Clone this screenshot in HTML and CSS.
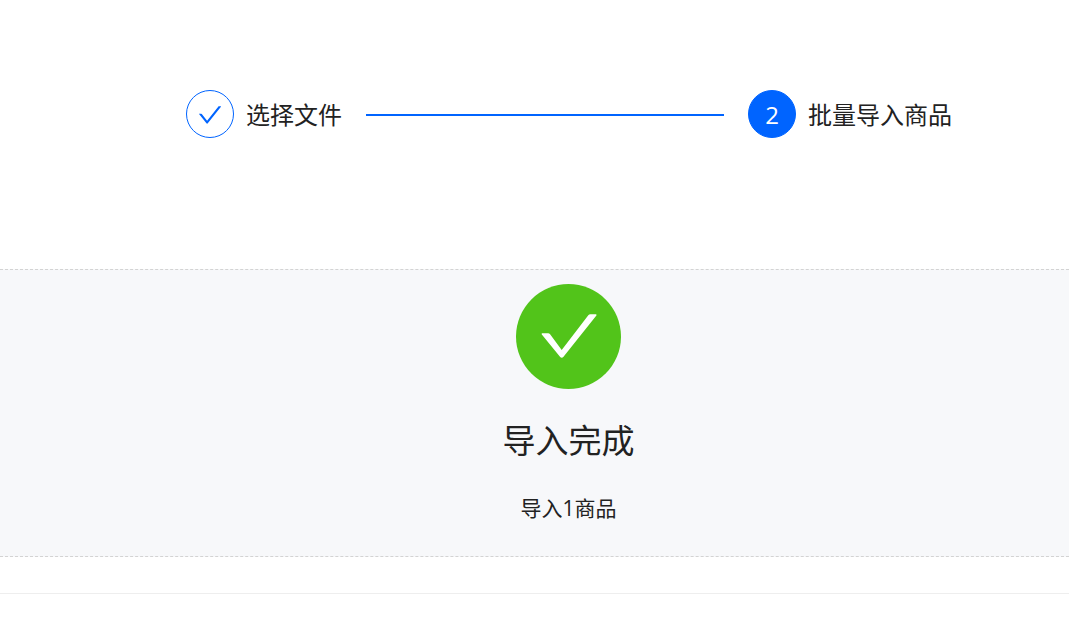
FILE: index.html
```
<!DOCTYPE html>
<html lang="zh-CN">
  <head>
    <title>批量导入商品</title>
    <meta charset="UTF-8">
    <meta name="viewport" content="width=device-width, initial-scale=1">
    <link rel="stylesheet" href="styles.css">
  </head>
  <body>
    <ol class="steps">
      <li class="step step-finished">
        <span class="step-icon">
          <svg class="step-check" viewBox="104 190 816 644" fill="currentColor" aria-hidden="true">
            <path d="M912 190h-69.9c-9.8 0-19.1 4.5-25.1 12.2L404.7 724.5 207 474a32 32 0 0 0-25.1-12.2H112c-6.7 0-10.4 7.7-6.3 12.9l273.9 347c12.8 16.2 37.4 16.2 50.3 0l488.4-618.9c4.1-5.1.4-12.8-6.3-12.8z"/>
          </svg>
        </span>
        <span class="step-title">选择文件</span>
      </li>
      <li class="step step-active" aria-current="step">
        <span class="step-icon">2</span>
        <span class="step-title">批量导入商品</span>
      </li>
    </ol>
    <main class="result">
      <svg class="result-icon" viewBox="0 0 105 105" aria-hidden="true">
        <circle cx="52.5" cy="52.5" r="52.5" fill="#52c41a"/>
        <path fill="#fff" d="M79.6 30.2h-5.2c-.9 0-1.6.3-2.1 1L45.7 66 34.1 50.2c-.5-.6-1.2-1-2-1h-5.7c-.7 0-1 .7-.6 1.2L44.2 73c.8 1 2.3 1 3.1 0L80.4 31.5c.4-.6 0-1.3-.8-1.3z"/>
      </svg>
      <h1>导入完成</h1>
      <p>导入1商品</p>
    </main>
    <hr class="divider">
  </body>
</html>
```
FILE: styles.css
```
* {
  box-sizing: border-box;
}

body {
  margin: 0;
  background-color: #fff;
  color: #222;
  font-family: "Open Sans", "Noto Sans CJK SC", sans-serif;
}

.steps {
  display: flex;
  margin: 0;
  padding: 90px 117px 131px 186px;
  list-style: none;
}

.step {
  display: flex;
  align-items: center;
  gap: 12px;
  height: 48px;
  font-size: 24px;
  line-height: 46px;
  white-space: nowrap;
}

.step-icon {
  display: flex;
  flex: none;
  align-items: center;
  justify-content: center;
  width: 48px;
  height: 48px;
  padding-top: 2px;
  border: 1px solid #0064ff;
  border-radius: 50%;
  color: #0064ff;
}

.step-title {
  padding-top: 2px;
}

.step-active .step-icon {
  background-color: #0064ff;
  color: #fff;
}

.step-check {
  width: 22px;
  height: 18px;
}

.step-finished {
  flex: 1;
}

/* line between the two steps */
.step-finished::after {
  content: "";
  flex: 1;
  height: 2px;
  margin: 2px 24px 0 12px;
  background-color: #0064ff;
}

.result {
  display: flex;
  flex-direction: column;
  align-items: center;
  padding: 14px 0 32px 68px;
  border-top: 1px dashed #d3d3d3;
  border-bottom: 1px dashed #d3d3d3;
  background-color: #f7f8fa;
}

.result-icon {
  width: 105px;
  height: 105px;
}

h1 {
  margin: 29px 0 0;
  font-size: 33px;
  font-weight: 400;
  line-height: 46px;
}

p {
  margin: 28px 0 0;
  font-size: 21px;
  line-height: 32px;
}

.divider {
  margin: 36px 0 0;
  border: 0;
  border-top: 1px solid #eee;
}
```
